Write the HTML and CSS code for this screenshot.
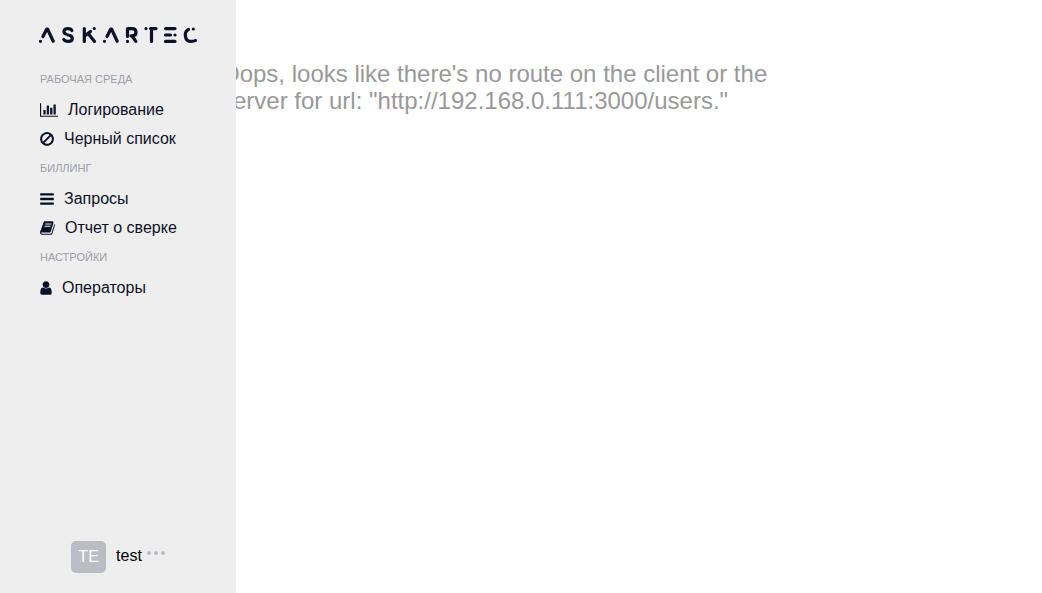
FILE: index.html
```html
<!DOCTYPE html>
<html lang="ru">
<head>
<meta charset="utf-8">
<title>Askartec</title>
<link rel="stylesheet" href="styles.css">
</head>
<body>
<div class="layout">
  <aside class="sidebar">
    <a class="logo" href="#" aria-label="Askartec">
      <svg width="160" height="20" viewBox="0 0 160 20" fill="none" stroke="currentColor" stroke-width="3.2" stroke-linecap="round" stroke-linejoin="round">
        <path d="M4 11.500 7.800 4H8.500L14.200 16.200M1.500 16.300h.01"/>
        <path d="M32.800 5.500Q32 3.600 29 3.600Q25 3.600 25 6.500Q25 8.500 27 9M31 10.500Q33.300 11.500 33.300 13.500Q33.300 16.400 29 16.400Q26 16.400 24.800 14.500M29.200 10h.01"/>
        <path d="M45.300 3.600V16.400M46 10.800 51.500 6.500M50 9.500 55.500 16.400M55.300 3.600h.01"/>
        <path d="M68 11.500 71.800 4H72.500L78.200 16.200M65.500 16.300h.01"/>
        <path d="M88.500 11.500V3.600H93Q97 3.600 97 7.200Q97 10.800 93 10.800H92M93.500 11.500 96.800 16.400M88.500 16.400h.01"/>
        <path d="M111.500 3.600H117M112.500 4V16.400M107 3.600h.01"/>
        <path d="M126.500 3.600H136M126.500 10H131.500M126.500 16.400H136M136 10h.01"/>
        <path d="M149.500 4.500C144.500 7 145.500 16.400 152 16.400Q155 16.400 156.500 15.500M154.300 4h.01"/>
      </svg>
    </a>
    <nav class="menu">
      <h2 class="menu-title">РАБОЧАЯ СРЕДА</h2>
      <a class="menu-item" href="#"><svg class="icon icon-chart" viewBox="0 0 2048 1792"><path d="M640 896v512h-256v-512h256zm384-512v1024h-256v-1024h256zm1024 1152v128h-2048v-1536h128v1408h1920zm-640-896v768h-256v-768h256zm384-384v1152h-256v-1152h256z"/></svg>Логирование</a>
      <a class="menu-item" href="#"><svg class="icon" viewBox="128 0 1536 1792"><path d="M1440 893q0-161-87-295l-754 753q137 89 297 89 111 0 211.500-43.500t173.500-116.500 116-174.500 43-212.500zm-999 299l755-754q-135-91-300-91-148 0-273 73t-198 199-73 274q0 162 89 299zm1223-299q0 157-61 300t-163.500 246-245 164-298.500 61-298.500-61-245-164-163.500-246-61-300 61-299.500 163.500-245.500 245-164 298.500-61 298.500 61 245 164 163.500 245.500 61 299.500z"/></svg>Черный список</a>
      <h2 class="menu-title">БИЛЛИНГ</h2>
      <a class="menu-item" href="#"><svg class="icon" viewBox="128 0 1536 1792"><path d="M1664 1344v128q0 26-19 45t-45 19h-1408q-26 0-45-19t-19-45v-128q0-26 19-45t45-19h1408q26 0 45 19t19 45zm0-512v128q0 26-19 45t-45 19h-1408q-26 0-45-19t-19-45v-128q0-26 19-45t45-19h1408q26 0 45 19t19 45zm0-512v128q0 26-19 45t-45 19h-1408q-26 0-45-19t-19-45v-128q0-26 19-45t45-19h1408q26 0 45 19t19 45z"/></svg>Запросы</a>
      <a class="menu-item" href="#"><svg class="icon icon-book" viewBox="64 0 1664 1792"><path d="M1703 478q40 57 18 129l-275 906q-19 64-76.500 107.500t-122.500 43.500h-923q-77 0-148.500-53.500t-99.500-131.500q-24-67-2-127 0-4 3-27t4-37q1-8-3-21.500t-3-19.500q2-11 8-21t16.500-23.500 16.500-23.500q23-38 45-91.500t30-91.500q3-10 .5-30t-.5-28q3-11 17-28t17-23q21-36 42-92t25-90q1-9-2.500-32t.5-28q4-13 22-30.500t22-22.500q19-26 42.500-84.500t27.500-96.500q1-8-3-25.500t-2-26.500q2-8 9-18t18-23 17-21q8-12 16.500-30.500t15-35 16-36 19.500-32 26.500-23.500 36-11.500 47.500 5.500l-1 3q38-9 51-9h761q74 0 114 56t18 130l-274 906q-36 119-71.500 153.500t-128.500 34.500h-869q-27 0-38 15-11 16-1 43 24 70 144 70h923q29 0 56-15.500t35-41.500l300-987q7-22 5-57 38 15 59 43zm-1064 2q-4 13 2 22.500t20 9.500h608q13 0 25.500-9.500t16.500-22.500l21-64q4-13-2-22.500t-20-9.500h-608q-13 0-25.500 9.500t-16.500 22.500zm-83 256q-4 13 2 22.500t20 9.500h608q13 0 25.500-9.500t16.500-22.500l21-64q4-13-2-22.500t-20-9.500h-608q-13 0-25.500 9.500t-16.500 22.500z"/></svg>Отчет о сверке</a>
      <h2 class="menu-title">НАСТРОЙКИ</h2>
      <a class="menu-item" href="#"><svg class="icon icon-user" viewBox="256 0 1280 1792"><path d="M1536 1399q0 109-62.500 187t-150.500 78h-854q-88 0-150.500-78t-62.500-187q0-85 8.500-160.500t31.500-152 58.500-131 94-89 134.500-34.500q131 128 313 128t313-128q76 0 134.500 34.500t94 89 58.500 131 31.500 152 8.500 160.500zm-256-887q0 159-112.500 271.500t-271.500 112.500-271.500-112.500-112.500-271.500 112.500-271.500 271.500-112.500 271.500 112.500 112.500 271.500z"/></svg>Операторы</a>
    </nav>
    <div class="account">
      <span class="avatar">TE</span>
      <span class="account-name">test</span>
      <button class="more" type="button" aria-label="Меню"><svg width="18" height="4" viewBox="0 0 18 4"><circle cx="2" cy="2" r="2"/><circle cx="9" cy="2" r="2"/><circle cx="16" cy="2" r="2"/></svg></button>
    </div>
  </aside>
  <main class="content">
    <p class="message">Oops, looks like there's no route on the client or the server for url: "http://192.168.0.111:3000/users."</p>
  </main>
</div>
</body>
</html>
```
FILE: styles.css
```css
* {
  box-sizing: border-box;
}

body {
  margin: 0;
  background: #fff;
  font: 16px/19px "Liberation Sans", Arial, sans-serif;
}

.layout {
  display: flex;
  min-height: 100vh;
}

.sidebar {
  position: relative;
  z-index: 1;
  display: flex;
  flex-direction: column;
  flex: 0 0 236px;
  padding: 25px 0 20px;
  background: #eee;
}

.logo {
  display: flex;
  padding-left: 39px;
  color: #0d1128;
}

.menu {
  flex: 1;
  padding: 24px 20px 20px 40px;
}

.menu-title {
  margin: 0;
  padding: 2px 0 13px;
  color: #9c9ea9;
  font-size: 11px;
  font-weight: 400;
  line-height: 16px;
}

.menu-item {
  display: flex;
  align-items: center;
  gap: 10px;
  height: 19px;
  margin-bottom: 10px;
  color: #0d1128;
  text-decoration: none;
}

.icon {
  width: 14px;
  height: 16px;
  fill: currentColor;
}

.icon-chart {
  width: 18px;
}

.icon-book {
  width: 15px;
}

.icon-user {
  width: 12px;
}

.account {
  display: flex;
  align-items: center;
  justify-content: center;
}

.avatar {
  width: 35px;
  border-radius: 5px;
  background: #bbbcc4;
  color: #fff;
  line-height: 32px;
  text-align: center;
}

.account-name {
  margin: 0 5px 3px 10px;
  color: #000;
}

.more {
  display: flex;
  margin-bottom: 8px;
  padding: 0;
  border: 0;
  background: none;
  fill: #bbbcc4;
  cursor: pointer;
}

.content {
  flex: 1;
  min-width: 0;
  padding-top: 60px;
}

.message {
  max-width: 600px;
  margin: 0 0 0 -15px;
  color: #999;
  font-size: 24px;
  line-height: 27px;
}
```
